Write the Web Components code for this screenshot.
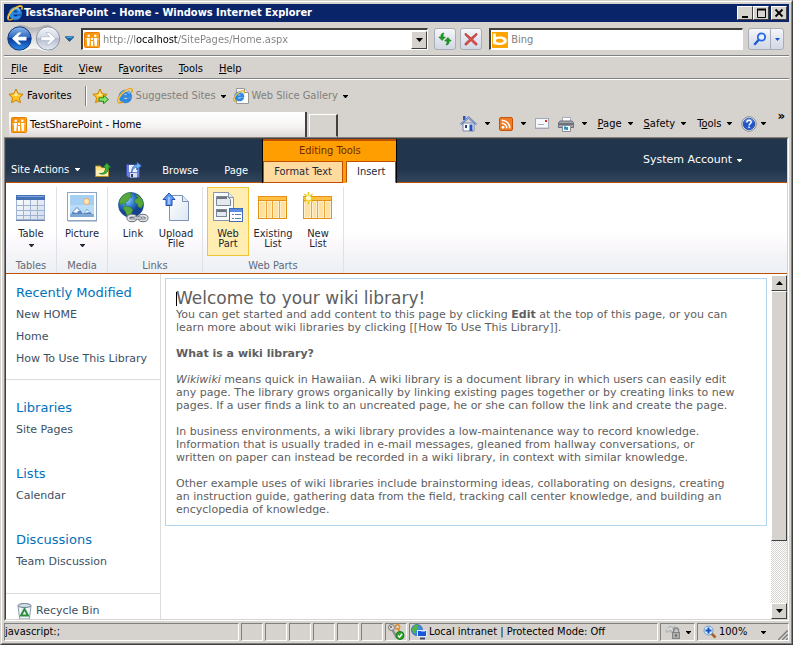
<!DOCTYPE html>
<html lang="en">
<head>
<meta charset="utf-8">
<title>TestSharePoint - Home - Windows Internet Explorer</title>
<style>
  html, body { height: 100%; margin: 0; }
  body {
    --face: #d6d3ce; --shade: #808080; --dark: #404040; --accent: #c04f00;
    --ui: "DejaVu Sans Condensed", "DejaVu Sans", sans-serif;
    --page: "DejaVu Sans", sans-serif;
    background: var(--face); color: #000;
    font: 11px/14px var(--ui);
    overflow: hidden;
  }
</style>
</head>
<body>
<browser-window>
  <title-bar slot="chrome">TestSharePoint - Home - Windows Internet Explorer</title-bar>
  <address-bar slot="chrome"></address-bar>
  <menu-bar slot="chrome"></menu-bar>
  <favorites-bar slot="chrome"></favorites-bar>
  <tab-row slot="chrome">TestSharePoint - Home</tab-row>

  <ribbon-nav></ribbon-nav>
  <ribbon-strip>
    <ribbon-group label="Tables">
      <ribbon-button icon="table" menu>Table</ribbon-button>
    </ribbon-group>
    <ribbon-group label="Media">
      <ribbon-button icon="picture" menu>Picture</ribbon-button>
    </ribbon-group>
    <ribbon-group label="Links">
      <ribbon-button icon="link">Link</ribbon-button>
      <ribbon-button icon="upload" mid>Upload<br>File</ribbon-button>
    </ribbon-group>
    <ribbon-group label="Web Parts">
      <ribbon-button icon="webpart" active>Web<br>Part</ribbon-button>
      <ribbon-button icon="list" wide>Existing<br>List</ribbon-button>
      <ribbon-button icon="newlist">New<br>List</ribbon-button>
    </ribbon-group>
  </ribbon-strip>
  <page-body>
    <side-nav slot="side"></side-nav>
    <wiki-editor>
      <h1>Welcome to your wiki library!</h1>
      <p>You can get started and add content to this page by clicking <b>Edit</b> at the top of this page, or you can learn more about wiki libraries by clicking [[How To Use This Library]].</p>
      <p><b>What is a wiki library?</b></p>
      <p><i>Wikiwiki</i> means quick in Hawaiian. A wiki library is a document library in which users can easily edit any page. The library grows organically by linking existing pages together or by creating links to new pages. If a user finds a link to an uncreated page, he or she can follow the link and create the page.</p>
      <p>In business environments, a wiki library provides a low-maintenance way to record knowledge. Information that is usually traded in e-mail messages, gleaned from hallway conversations, or written on paper can instead be recorded in a wiki library, in context with similar knowledge.</p>
      <p>Other example uses of wiki libraries include brainstorming ideas, collaborating on designs, creating an instruction guide, gathering data from the field, tracking call center knowledge, and building an encyclopedia of knowledge.</p>
    </wiki-editor>
    <scroll-bar slot="scroll"></scroll-bar>
  </page-body>

  <status-bar slot="status"></status-bar>
</browser-window>

<script>
const define = (name, css, html, setup) => {
  const tpl = document.createElement('template');
  tpl.innerHTML = `<style>
    *,:host{box-sizing:border-box}
    button,input{font:inherit;color:inherit;margin:0;padding:0;border:0;background:none;border-radius:0}
    a{color:inherit;text-decoration:none}
    ${css}</style>${html}`;
  customElements.define(name, class extends HTMLElement {
    constructor() {
      super();
      this.attachShadow({ mode: 'open' }).append(tpl.content.cloneNode(true));
    }
    connectedCallback() { if (setup) setup(this, this.shadowRoot); }
  });
};

const ieLetter = `
  <path d="M8.400 2.300C4.600 2.300 2 5 2 8.800c0 3.800 2.800 6 6.400 6 3 0 5.200-1.400 6-4.200h-4c-.4.700-.9 1-1.800 1-1.200 0-2-.8-2.100-2h8.200C14.900 5.400 12.400 2.300 8.400 2.300zM6.600 7.200c.2-1.100.8-1.700 1.900-1.700s1.800.6 1.900 1.700z" fill="#2b8ae6" stroke="#1f74d0" stroke-width=".6"/>
  <path d="M3.300 7.400C4.100 4.700 6 3.200 8.500 3.200c1.900 0 3.400.8 4.200 2.200" fill="none" stroke="#8fd0ff" stroke-width="1.100"/>
  <path d="M1.700 14.800C-.6 12.900 2.400 7 7.300 3.600 10.500 1.300 13.900.200 14.900 1.500c.5.700.3 1.900-.3 3.100" fill="none" stroke="#e0a41c" stroke-width="1.800"/>
  <path d="M1.700 14.500C.2 12.500 3 7.400 7.300 4.100 10.400 1.800 13.500.900 14.500 1.700" fill="none" stroke="#ffe27a" stroke-width=".8"/>
  <path d="M1.700 14.700c1 .6 2.700.1 4.300-.9" fill="none" stroke="#d79a13" stroke-width="1.300"/>`;
const star = `<path d="M8 1l2.100 4.700 5 .6-3.700 3.400 1 5L8 12.200l-4.400 2.500 1-5L.9 6.300l5-.6z" fill="#ffc321" stroke="#c98105"/><path d="M8 3l1.400 3.500 3.300.4-5.500 1L4 7l2.700-.5z" fill="#ffeb95"/>`;
const listGrid = `<rect x=".5" y="4.500" width="28" height="22" fill="#fff3d0" stroke="#e59118"/><rect x="1" y="5" width="27" height="4" fill="#ffbf45"/><path d="M1 8.500h27" stroke="#e59118"/><path d="M1.500 9.500h6v16h-6zM9.500 9.500h4v16h-4zM15.500 9.500h5v16h-5zM22.500 9.500h5v16h-5z" fill="#ffe0a0" stroke="#fff0cc"/><path d="M8.500 9v17M14.500 9v17M21.500 9v17" stroke="#eda53b"/>`;

const ICONS = {
  ie: [16, 16, ieLetter],
  iepage: [16, 16, `<path d="M3.500.5h8l4 4v11h-12z" fill="#fff" stroke="#999"/><path d="M11.500.5v4h4" fill="#e8e8e8" stroke="#999"/><g transform="translate(0 2) scale(.75)">${ieLetter}</g>`],
  sp: [16, 16, `<defs><linearGradient id="g" x2="1" y2="1"><stop stop-color="#f68a00"/><stop offset="1" stop-color="#ffad26"/></linearGradient></defs><rect x=".5" y=".5" width="15" height="15" rx="1" fill="url(#g)" stroke="#e87d00"/><g fill="#fff"><circle cx="4.700" cy="3.700" r="1.300"/><circle cx="11.300" cy="3.700" r="1.300"/><circle cx="8" cy="6.900" r="1.200"/><path d="M2.700 6h3.200v2.300L5.200 14H3.200zM10.100 6h3.200l-.5 8h-2l-.7-5.700zM6.900 9h2.200l-.2 5H7.100z"/><circle cx="1.900" cy="7" r=".5"/><circle cx="14.100" cy="7" r=".5"/></g>`],
  bing: [16, 16, `<rect width="16" height="16" fill="#ffa500"/><path d="M1 1.500h2.800V5C7 3.800 14.800 4 14.800 8.700S4 14 1 11.500zM3.800 8.600c0 2.900 7.700 3 7.700.2S3.800 6.200 3.800 8.600z" fill="#fff" fill-rule="evenodd"/>`],
  nav: [56, 30, `<defs>
      <linearGradient id="p" x2="0" y2="1"><stop stop-color="#a3a3a3"/><stop offset=".35" stop-color="#d4d4d4"/><stop offset="1" stop-color="#fff"/></linearGradient>
      <linearGradient id="b" x2="0" y2="1"><stop stop-color="#89b9ec"/><stop offset=".45" stop-color="#2e69bf"/><stop offset=".5" stop-color="#06399c"/><stop offset="1" stop-color="#2e8de8"/></linearGradient>
      <linearGradient id="f" x2="0" y2="1"><stop stop-color="#f4f6fa"/><stop offset=".48" stop-color="#d0d6e2"/><stop offset=".5" stop-color="#b4bccd"/><stop offset="1" stop-color="#e6eaf4"/></linearGradient></defs>
    <path d="M14 1c6 0 8 3 14 3S36 1 42 1a14 14 0 0 1 0 27c-6 0-8-3-14-3s-8 3-14 3A14 14 0 0 1 14 1z" fill="url(#p)" stroke="#bbb" stroke-width=".6"/>
    <circle cx="13.500" cy="14.500" r="11.700" fill="url(#b)" stroke="#17377e"/><circle cx="42" cy="14.500" r="11.700" fill="url(#f)" stroke="#8c95a6"/>
    <path d="M6 14.500l6.500-6h3l-3.700 4.300H20.500v3.600H11.800l3.700 4.200h-3z" fill="#fff"/><path d="M49.500 14.500l-6.500-6h-3l3.700 4.300H35v3.600h8.700L40 20.600h3z" fill="#fff" stroke="#9aa4b6" stroke-width=".5"/>`],
  bluedown: [9, 6, `<path d="M.5.500h8v1l-4 4-4-4z" fill="#1c66b0" stroke="#0d4478" stroke-width=".6"/><path d="M1.500 1.200h6" stroke="#53c2ea"/>`],
  smallblue: [5, 3, `<path d="M0 0h5L2.500 3z" fill="#1750d8"/>`],
  down: [5, 3, `<path d="M0 0h5v.6L2.900 3h-.8L0 .6z" fill="currentColor"/>`],
  bigdown: [7, 4, `<path d="M0 0h7L3.500 4z"/>`],
  bigup: [7, 4, `<path d="M0 4h7L3.500 0z"/>`],
  refresh: [16, 16, `<g fill="#1f9d1f" stroke="#0a6b12" stroke-width=".5"><path d="M6.500 2C4 2.300 3.900 4 3.900 6H1.800l3.300 3.500L8.400 6H6.100c0-1.500-.2-2.500 1-3.500z"/><path d="M9.500 14c2.500-.3 2.600-2 2.600-4h2.100l-3.300-3.500L7.600 10h2.300c0 1.500.2 2.500-1 3.500z"/></g>`],
  stop: [16, 16, `<path d="M3 2.500L8 6.800l5-4.300h1V4L9.600 8.200 14 12.500V14h-1.500L8 9.700 3.500 14H2v-1.500l4.400-4.300L2 4V2.500z" fill="#d9504c" stroke="#a32a27" stroke-width=".6"/>`],
  search: [14, 14, `<circle cx="8.500" cy="5" r="3.700" fill="#eaf2ff" stroke="#2468e4" stroke-width="1.800"/><path d="M5.800 7.800L1.300 12.700" stroke="#1c5ad8" stroke-width="2.400"/>`],
  star: [16, 16, star],
  staradd: [17, 17, `${star}<path d="M7 9.800h4.500V7.300l5 4.200-5 4.200v-2.500H7z" fill="#8be36f" stroke="#1c8b1c"/>`],
  home: [17, 17, `<path d="M3 8h11v8H3z" fill="#f7f9ff" stroke="#7b86a8"/><path d="M3 1h2.500v4H3z" fill="#3154b8"/><path d="M.5 8.800L8.500 1.500l8 7.300-1 .7-7-6.200-7 6.200z" fill="#a9c2ee" stroke="#4c6aa8" stroke-width=".8"/><path d="M5 10h2v3H5z" fill="#333c66"/><path d="M9.500 9.500h3V16h-3z" fill="#2253b8"/>`],
  feed: [14, 14, `<rect x=".5" y=".5" width="13" height="13" rx="1.500" fill="#f07c26" stroke="#c5530e"/><circle cx="4" cy="10.300" r="1.400" fill="#fff"/><path d="M2.800 6.300a5 5 0 0 1 5 5M2.800 3.200a8 8 0 0 1 8 8" fill="none" stroke="#fff" stroke-width="1.500"/>`],
  mail: [14, 11, `<rect x=".5" y=".5" width="13" height="10" fill="#f5f7fb" stroke="#a2a7b4"/><path d="M1 9.500h12" stroke="#d5d9e2"/><rect x="10" y="2" width="2" height="2" fill="#e02c1c"/><path d="M3 6.500h6" stroke="#aaa"/>`],
  printer: [16, 16, `<path d="M4.500 1.500h8V7h-8z" fill="#fff" stroke="#aab"/><path d="M.5 6.500L2 5h12l1.500 1.500v5H.5z" fill="#a2a5aa" stroke="#6c7078"/><path d="M1 8h14" stroke="#3a3d44"/><path d="M4.500 9.500h8v6h-8z" fill="#f3f8ff" stroke="#8a8f9a"/><path d="M6 12h2" stroke="#2c84dd" stroke-width="3"/><rect x="8" y="11" width="2" height="3" fill="#2e9c8c"/>`],
  help: [16, 16, `<defs><linearGradient id="h" x2="0" y2="1"><stop stop-color="#6b9df2"/><stop offset=".5" stop-color="#1f4fc0"/><stop offset="1" stop-color="#2b66d8"/></linearGradient></defs><circle cx="8" cy="8" r="7.300" fill="#dfe3ec" stroke="#8a8f9c"/><circle cx="8" cy="8" r="5.800" fill="url(#h)" stroke="#1c3d92" stroke-width=".7"/><path d="M5.900 6.500c0-3 4.300-2.800 4.300-.3 0 1.600-2.100 1.500-2.100 3.200M8.100 10.500v1.500" fill="none" stroke="#fff" stroke-width="1.500"/>`],
  folderup: [16, 16, `<path d="M.5 4h5l1 1.500h7v9H.5z" fill="#ffe287" stroke="#b58a1c"/><path d="M1 8h12v6H1z" fill="#ffefb4"/><path d="M4.500 11.500C9 12 10.500 9 10.500 5.500H8.300L11.800 1l3.900 4.500h-2.300c.3 5-3.600 8-8.900 6z" fill="#3fb343" stroke="#157a1f" stroke-width=".7"/>`],
  saveup: [16, 16, `<path d="M.5 2.500h13v13H2.500L.5 14z" fill="#6a80dc" stroke="#3a4ba6"/><rect x="3" y="3" width="8" height="7" fill="#f1f4ff"/><rect x="4" y="11" width="7" height="4.500" fill="#d7dcec"/><rect x="5" y="12" width="2" height="3" fill="#333c66"/><path d="M5.500 11C7 6.500 8.500 5.500 10.500 5.300V7.500L15.500 4 11-.1V2.500C7.500 3 5.500 6 5.500 11z" fill="#6fb2f4" stroke="#2358a8" stroke-width=".7"/>`],
  table: [30, 30, `<defs><linearGradient id="t" x2="1" y2="1"><stop stop-color="#fff"/><stop offset="1" stop-color="#cfdcec"/></linearGradient></defs><rect x=".5" y="3.500" width="28" height="24" fill="url(#t)" stroke="#9fb3d1"/><path d="M1 13.500h28M1 18.500h28M1 23.500h28M7.500 8v20M14.500 8v20M21.500 8v20" stroke="#9fb3d1"/><rect x="0" y="3" width="29" height="5" fill="#4470b5"/><path d="M1 4.500h27" stroke="#7fa3dc"/><path d="M0 28.500h29" stroke="#6d84a8"/>`],
  picture: [30, 30, `<rect x=".5" y=".5" width="29" height="28" fill="#fff" stroke="#8fa5c3"/><path d="M1 29.500h29" stroke="#c3cbd8"/><rect x="3" y="3" width="24" height="22" fill="#b9dcf7"/><rect x="3" y="3" width="24" height="10" fill="#a5d0f3"/><circle cx="19.500" cy="9.500" r="3" fill="#ffe6b0" stroke="#f2a766"/><path d="M3 24l3-5 4-4 4 4 2 3 4-5 4 4 3 3v1H3z" fill="#5a86bf"/><path d="M6 20l4-4 3 3-2 0-1 2zM17 21l3-3 3 2-3 .5z" fill="#f4f9ff"/><path d="M3 22h24v3H3z" fill="#7fa7d4"/>`],
  link: [30, 30, `<defs><radialGradient id="w" cx=".35" cy=".3"><stop stop-color="#8fd0fb"/><stop offset=".6" stop-color="#2d78cf"/><stop offset="1" stop-color="#154290"/></radialGradient></defs><circle cx="13" cy="13" r="12.500" fill="url(#w)" stroke="#27508f" stroke-width=".7"/><g fill="#57a83c" stroke="#2f7024" stroke-width=".5"><path d="M3 6c3-5 8-6 11-5l-2 2 2 2-3 1-1 3-3 1 1 3-4-2-2 2C.9 10 1.500 8 3 6z"/><path d="M17 2c5 2 8 5 8.300 10l-2 4-3-1-1-3-3-2 1-3 3-1-2-2z"/><path d="M7 14l5 1 3 3-2 4-1 3-3-1-2-5-2-3z"/></g><g fill="none" stroke="#666d76" stroke-width="3.600"><ellipse cx="14" cy="26" rx="3.800" ry="2.400"/><ellipse cx="25" cy="26" rx="3.800" ry="2.400"/></g><g fill="none" stroke="#dfe3e8" stroke-width="1.800"><ellipse cx="14" cy="26" rx="3.800" ry="2.400"/><ellipse cx="25" cy="26" rx="3.800" ry="2.400"/></g><path d="M16 26h7" stroke="#666d76" stroke-width="3"/><path d="M16 26h7" stroke="#dfe3e8" stroke-width="1.400"/>`],
  upload: [28, 30, `<defs><linearGradient id="u" x2="1" y2="1"><stop stop-color="#fff"/><stop offset="1" stop-color="#dce6f3"/></linearGradient></defs><path d="M7.500 3.500h13l6 6v19h-19z" fill="url(#u)" stroke="#7d93b5"/><path d="M20.500 3.500v6h6" fill="#dfe9f6" stroke="#7d93b5"/><path d="M7 1L1 7.500h3v6h6v-6h3z" fill="#5f9af0" stroke="#244fae"/><path d="M6 5h2v7H6z" fill="#9cc4fb"/>`],
  webpart: [30, 30, `<path d="M.5.500h15l5 5v23H.5z" fill="#f8fafc" stroke="#8895a8"/><path d="M15.500.500v5h5" fill="#dfe7f2" stroke="#8895a8"/><path d="M3.500 4.500h11l3 3v6h-14z" fill="#e4e9ef" stroke="#7c8794"/><path d="M4 6h10" stroke="#6c7682" stroke-width="2"/><rect x="3.500" y="17.500" width="10" height="7" fill="#e4e9ef" stroke="#7c8794"/><path d="M4 19h9" stroke="#6c7682" stroke-width="2"/><rect x="16.500" y="16.500" width="13" height="13" fill="#fff" stroke="#3d6cb8"/><path d="M17 18.500h12" stroke="#5b8ee0" stroke-width="3"/><path d="M19 22.500h2M22 22.500h6M19 26.500h2M22 26.500h6" stroke="#5b7cb5"/>`],
  list: [30, 30, listGrid],
  newlist: [30, 30, `${listGrid}<path d="M5.500 0v12M0 6h12M1.500 2l8 8M9.500 2l-8 8" stroke="#ecca1c" stroke-width="1.700"/><circle cx="5.500" cy="6" r="2.500" fill="#fffbd0"/>`],
  recycle: [15, 17, `<path d="M1 3h13l-1.700 13H2.700z" fill="#eef4f8" stroke="#8a9eb0"/><ellipse cx="7.500" cy="2.500" rx="6.500" ry="2" fill="#d3dde6" stroke="#708295"/><path d="M7.500 6L4 12.500h7z" fill="none" stroke="#2f8d3e" stroke-width="2"/>`],
  keys: [18, 18, `<path d="M5 6l5 9" stroke="#8d8d8d" stroke-width="2.400"/><path d="M11 5l2 6" stroke="#e0912b" stroke-width="2"/><circle cx="4.500" cy="4.500" r="3" fill="#d8d8d8" stroke="#777"/><circle cx="10.500" cy="4" r="2.200" fill="none" stroke="#e0912b" stroke-width="1.400"/><circle cx="4" cy="4" r="1" fill="#666"/><circle cx="13" cy="12.500" r="4" fill="#2da52d" stroke="#1b7c1b"/><path d="M11 12.500l1.500 1.700 2.600-3.400" fill="none" stroke="#fff" stroke-width="1.400"/>`],
  intranet: [16, 16, `<circle cx="6" cy="6" r="5.500" fill="#3c8be0" stroke="#23589c" stroke-width=".7"/><path d="M1.500 4C3 1 6 0 8 1L6 3l1 2-3 2 1 3C2 9 .5 7 1.500 4z" fill="#54b83e"/><rect x="6.500" y="6.500" width="9" height="6" fill="#1b57d8" stroke="#e6e9f2"/><path d="M9 14.500h5" stroke="#46506a" stroke-width="2"/><path d="M10 7.500h4" stroke="#71a6ff"/>`],
  lock: [18, 16, `<path d="M1 7l5-6 2 2 3-1 2 4-4 4-4-2-3 1z" fill="#b9bbbd"/><path d="M3 6l4-2 2 3" fill="none" stroke="#f5f5f5"/><path d="M9.500 9V6.500a2.500 2.500 0 0 1 5 0V9" fill="none" stroke="#8a8a8a" stroke-width="1.500"/><rect x="8.500" y="8.500" width="7" height="6" fill="#adadad" stroke="#858585"/><path d="M12 10.500v2" stroke="#555" stroke-width="1.500"/>`],
  zoomin: [14, 14, `<path d="M8 8l4.500 4.500" stroke="#a8622a" stroke-width="2.600"/><circle cx="5.500" cy="5.500" r="4.500" fill="#d6ebff" stroke="#6f9ccc"/><path d="M5.500 2.500v6M2.500 5.500h6" stroke="#1453c0" stroke-width="2"/>`],
  caret: [3, 14, `<path d="M.5 0v14" stroke="#000"/>`],
  min: [12, 11, `<path d="M3 9h6" stroke="#000" stroke-width="2"/>`],
  max: [12, 11, `<path d="M2.500 2v7.500h8V1" fill="none" stroke="#000"/><path d="M2 1.500h9" stroke="#000" stroke-width="2"/>`],
  close: [12, 11, `<path d="M2.500 1.500l7 7M9.500 1.500l-7 7" stroke="#000" stroke-width="1.800"/>`],
  grip: [11, 11, `<path d="M0 11L11 0M4 11l7-7M8 11l3-3" stroke="#fff"/><path d="M1 11L11 1M5 11l6-6M9 11l2-2" stroke="#808080" stroke-width="1.600"/>`],
};

customElements.define('ui-icon', class extends HTMLElement {
  connectedCallback() {
    if (this.shadowRoot) return;
    const [w, h, body] = ICONS[this.getAttribute('name')];
    this.attachShadow({ mode: 'open' }).innerHTML =
      `<style>:host{display:block;flex:none;width:${w}px;height:${h}px}svg{display:block;overflow:visible}</style>
       <svg width="${w}" height="${h}" viewBox="0 0 ${w} ${h}" aria-hidden="true">${body}</svg>`;
  }
});

define('browser-window', `
  :host{display:block;height:100vh;border:1px solid;border-color:var(--face) var(--dark) var(--dark) var(--face)}
  .in{height:100%;border:1px solid;border-color:#fff var(--shade) var(--shade) #fff;padding:2px;display:flex;flex-direction:column}
  .view{flex:1;min-height:0;display:flex;flex-direction:column;border:1px solid;border-color:var(--shade) #fff #fff var(--shade)}
  .page{flex:1;min-height:0;display:flex;flex-direction:column;background:#fff;border:1px solid;border-color:var(--dark) var(--face) var(--face) var(--dark)}`,
  `<div class="in"><slot name="chrome"></slot><div class="view"><main class="page"><slot></slot></main></div><slot name="status"></slot></div>`);

define('title-bar', `
  :host{display:flex;align-items:center;flex:none;height:18px;background:#0a246a;color:#fff;font-weight:bold;padding:0 2px 0 3px}
  span{flex:1;white-space:nowrap;overflow:hidden;padding-left:1px}
  button{width:16px;height:14px;background:var(--face);border:1px solid;border-color:#fff var(--dark) var(--dark) #fff;display:flex;align-items:center;justify-content:center}
  button:last-child{margin-left:2px}`,
  `<ui-icon name="ie"></ui-icon><span><slot></slot></span>
   <button aria-label="Minimize"><ui-icon name="min"></ui-icon></button><button aria-label="Maximize"><ui-icon name="max"></ui-icon></button><button aria-label="Close"><ui-icon name="close"></ui-icon></button>`);

define('address-bar', `
  :host{display:flex;align-items:center;flex:none;height:35px;padding:0 5px 0 2px;border-bottom:1px solid #fff;box-shadow:inset 0 -1px var(--shade)}
  .nav{position:relative;display:flex}
  .nav button{position:absolute;top:2px;width:26px;height:26px;border-radius:13px}
  .nav .f{right:1px}
  .hist{margin:0 7px 0 3px;display:flex}
  .box{display:flex;align-items:center;height:22px;background:#fff;border:2px solid;border-color:var(--dark) #fff #fff var(--dark);border-right-width:1px;border-bottom-width:1px;padding-left:1px}
  .addr{flex:349}
  .find{flex:254;margin:0 5px 0 7px}
  input{flex:1;min-width:0;margin-left:3px;outline:0;color:#808080}
  .addr input{background:linear-gradient(90deg,#808080 32px,#000 32px,#000 75px,#808080 75px);-webkit-background-clip:text;background-clip:text;-webkit-text-fill-color:transparent}
  .drop{width:16px;height:18px;background:var(--face);border:1px solid;border-color:#fff var(--dark) var(--dark) #fff;display:grid;place-items:center}
  .sq,.split{height:22px;border:1px solid #a9adb8;border-radius:3px;background:linear-gradient(#f6f7fb,#e2e5ee 50%,#d3d8e6);display:grid;place-items:center}
  .sq{width:22px;margin-left:6px}.sq + .sq{margin-left:4px}
  .split{grid-template-columns:21px 13px;width:36px;padding:0}
  .split button{height:20px;width:100%;display:grid;place-items:center}
  .split button + button{border-left:1px solid #a9adb8}`,
  `<div class="nav"><ui-icon name="nav"></ui-icon><button aria-label="Back"></button><button class="f" aria-label="Forward"></button></div>
   <button class="hist" aria-label="Recent pages"><ui-icon name="bluedown"></ui-icon></button>
   <div class="box addr"><ui-icon name="sp"></ui-icon><input type="text" aria-label="Address" value="http://localhost/SitePages/Home.aspx"><button class="drop" aria-label="Show addresses"><ui-icon name="bigdown"></ui-icon></button></div>
   <button class="sq" aria-label="Refresh"><ui-icon name="refresh"></ui-icon></button><button class="sq" aria-label="Stop"><ui-icon name="stop"></ui-icon></button>
   <div class="box find"><ui-icon name="bing"></ui-icon><input type="text" aria-label="Search" value="Bing"></div>
   <div class="split"><button aria-label="Search"><ui-icon name="search"></ui-icon></button><button aria-label="Search options"><ui-icon name="smallblue"></ui-icon></button></div>`);

define('menu-bar', `
  :host{display:flex;align-items:center;flex:none;height:23px;padding:1px 0 0 7px;gap:16px;border-bottom:1px solid #fff;box-shadow:inset 0 -1px var(--shade)}`,
  `<button><u>F</u>ile</button><button><u>E</u>dit</button><button><u>V</u>iew</button><button>F<u>a</u>vorites</button><button><u>T</u>ools</button><button><u>H</u>elp</button>`);

define('favorites-bar', `
  :host{display:flex;align-items:center;flex:none;height:32px;padding-left:4px}
  button,a{display:flex;align-items:center;gap:3px;white-space:nowrap}
  .sep{width:2px;height:20px;background:var(--shade);border-right:1px solid #fff;margin:0 5px 0 13px}
  a{color:#808080;margin-left:8px}
  a ui-icon:last-child{color:#000;margin-left:2px}
  a + a{margin-left:7px}`,
  `<button><ui-icon name="star"></ui-icon>Favorites</button><span class="sep"></span>
   <button aria-label="Add to Favorites Bar"><ui-icon name="staradd"></ui-icon></button>
   <a href="#"><ui-icon name="ie"></ui-icon>Suggested Sites<ui-icon name="down"></ui-icon></a>
   <a href="#"><ui-icon name="iepage"></ui-icon>Web Slice Gallery<ui-icon name="down"></ui-icon></a>`);

define('tab-row', `
  :host{display:flex;flex:none;height:25px;padding-left:5px;align-items:flex-end}
  .tab{flex:0 1 298px;height:25px;display:flex;align-items:center;gap:3px;padding-left:2px;white-space:nowrap;background:linear-gradient(#fff,#f6f2f2 60%,#ddd8d8);border-right:2px solid var(--dark)}
  .new{width:29px;height:23px;margin-left:2px;border:1px solid;border-color:#fff var(--dark) transparent #fff;border-right-width:2px}
  nav{flex:1;display:flex;align-items:center;justify-content:flex-end;height:25px;padding-bottom:2px}
  nav button{display:flex;align-items:center;gap:8px;margin-left:11px}
  nav .t{gap:6px}
  nav .i{margin-left:9px}
  nav .h{gap:4px;margin-left:9px}
  nav .more{align-self:flex-start;margin:-3px 4px 0 11px;font-weight:bold;font-size:13px}`,
  `<button class="tab"><ui-icon name="sp"></ui-icon><slot></slot></button><button class="new" aria-label="New Tab"></button>
   <nav aria-label="Command bar">
    <button aria-label="Home"><ui-icon name="home"></ui-icon><ui-icon name="down"></ui-icon></button>
    <button class="i" aria-label="Feeds"><ui-icon name="feed"></ui-icon><ui-icon name="down"></ui-icon></button>
    <button class="i" aria-label="Read mail"><ui-icon name="mail"></ui-icon></button>
    <button class="i" aria-label="Print"><ui-icon name="printer"></ui-icon><ui-icon name="down"></ui-icon></button>
    <button class="t"><span><u>P</u>age</span><ui-icon name="down"></ui-icon></button>
    <button class="t"><span><u>S</u>afety</span><ui-icon name="down"></ui-icon></button>
    <button class="t"><span>T<u>o</u>ols</span><ui-icon name="down"></ui-icon></button>
    <button class="h" aria-label="Help"><ui-icon name="help"></ui-icon><ui-icon name="down"></ui-icon></button>
    <button class="more">»</button>
   </nav>`);

define('ribbon-nav', `
  :host{display:flex;flex:none;height:44px;align-items:flex-end;padding-left:5px;color:#fff;background:linear-gradient(#21354c 70%,#31465e);border-bottom:1px solid var(--accent)}
  button{white-space:nowrap}
  .site{display:flex;align-items:center;gap:6px;height:25px}
  .ic{height:25px;display:flex;align-items:center;margin-left:15px}
  .t{height:22px;margin-left:20px}
  .t + .t{margin-left:26px}
  .ctx{height:44px;margin:0 0 -1px 14px;border:1px solid #000;border-top-width:0;border-bottom:0;background:#ff9e00;display:flex;flex-direction:column;box-shadow:inset 0 2px var(--accent)}
  .ctx span{height:22px;line-height:24px;text-align:center;color:#6b2a00}
  .sub{display:flex;gap:3px;height:22px;color:#1e2a3a}
  .sub button{padding:0 10px;background:#ffdb9f;border:1px solid var(--accent)}
  .sub .on{background:#fff;border-bottom-color:#fff}
  .user{margin:0 45px 0 auto;height:44px;display:flex;align-items:center;gap:5px;font-family:var(--page)}`,
  `<button class="site">Site Actions<ui-icon name="down"></ui-icon></button>
   <button class="ic" aria-label="Navigate Up"><ui-icon name="folderup"></ui-icon></button><button class="ic" aria-label="Save and Close"><ui-icon name="saveup"></ui-icon></button>
   <button class="t">Browse</button><button class="t">Page</button>
   <div class="ctx"><span>Editing Tools</span><div class="sub"><button>Format Text</button><button class="on">Insert</button></div></div>
   <button class="user">System Account<ui-icon name="down"></ui-icon></button>`);

define('ribbon-strip', `
  :host{display:flex;flex:none;height:91px;padding-top:4px;background:linear-gradient(#fff 55%,#fbf8fc 68%,#f3f4f6 82%,#ecf0f5);border-bottom:1px solid var(--accent)}`,
  `<slot></slot>`);

define('ribbon-group', `
  :host{display:flex;flex-direction:column;border-right:1px solid #dfe1e8;padding:0 4px}
  .b{display:flex;flex:1}
  .l{text-align:center;color:#5f6b7a;line-height:14px}`,
  `<div class="b"><slot></slot></div><div class="l"></div>`,
  (el, root) => { root.querySelector('.l').textContent = el.getAttribute('label'); });

define('ribbon-button', `
  :host{display:block;width:42px}
  :host([mid]){width:44px}
  :host([wide]){width:48px}
  button{width:100%;height:69px;border:1px solid transparent;display:flex;flex-direction:column;align-items:center;padding-top:4px;color:#1e2733}
  :host([active]) button{background:#ffedb1;border-color:#f3c436}
  .x{line-height:10px;margin-top:7px;white-space:nowrap}
  .m{margin-top:5px}`,
  `<button><span class="i"></span><span class="x"><slot></slot></span></button>`,
  (el, root) => {
    root.querySelector('.i').innerHTML = `<ui-icon name="${el.getAttribute('icon')}"></ui-icon>`;
    if (el.hasAttribute('menu')) root.querySelector('button').insertAdjacentHTML('beforeend', '<ui-icon class="m" name="down"></ui-icon>');
  });

define('page-body', `
  :host{display:flex;flex:1;min-height:0;overflow:hidden}
  .c{flex:1;min-width:0;padding:4px}`,
  `<slot name="side"></slot><div class="c"><slot></slot></div><slot name="scroll"></slot>`);

define('side-nav', `
  :host{display:block;flex:none;width:155px;border-right:1px solid #dcdcdc;font-family:var(--page);color:#3b4f65;white-space:nowrap;overflow:hidden}
  h2{margin:0;font-size:13px;font-weight:normal;line-height:22px;color:#0072bc}
  a{display:block;line-height:22px}
  section{padding:0 0 22px 10px}
  section:first-of-type{padding-top:8px;padding-bottom:9px;border-bottom:1px solid #dcdcdc;margin-bottom:17px}
  section:last-of-type{padding-bottom:20px}
  .bin{display:flex;align-items:center;gap:4px;border-top:1px solid #dcdcdc;padding:6px 0 0 11px}`,
  `<section><h2><a href="#">Recently Modified</a></h2><a href="#">New HOME</a><a href="#">Home</a><a href="#">How To Use This Library</a></section>
   <section><h2><a href="#">Libraries</a></h2><a href="#">Site Pages</a></section>
   <section><h2><a href="#">Lists</a></h2><a href="#">Calendar</a></section>
   <section><h2><a href="#">Discussions</a></h2><a href="#">Team Discussion</a></section>
   <a class="bin" href="#"><ui-icon name="recycle"></ui-icon>Recycle Bin</a>`);

define('wiki-editor', `
  :host{display:block;border:1px solid #b3d6f0;padding:9px 30px 9px 10px;font:11px/13px var(--page);color:#5e5e5e;position:relative}
  ui-icon{position:absolute;left:10px;top:13px}
  ::slotted(h1){margin:0;font-size:17px;line-height:20px;font-weight:normal}
  ::slotted(p){margin:0 0 13px}
  ::slotted(p:last-child){margin:0}`,
  `<ui-icon name="caret"></ui-icon><slot></slot>`);

define('scroll-bar', `
  :host{display:flex;flex-direction:column;flex:none;width:16px;margin-top:1px;background:repeating-conic-gradient(#fff 0 25%,var(--face) 0 50%) 0 0/2px 2px}
  button,.th{background:var(--face);border:1px solid;border-color:#fff var(--dark) var(--dark) #fff}
  button{height:16px;flex:none;display:grid;place-items:center}
  .th{flex:80}.r{flex:20}`,
  `<button aria-label="Scroll up"><ui-icon name="bigup"></ui-icon></button><div class="th"></div><div class="r"></div><button aria-label="Scroll down"><ui-icon name="bigdown"></ui-icon></button>`);

define('status-bar', `
  :host{display:flex;flex:none;height:20px;padding-top:2px;gap:2px}
  div{height:18px;border:1px solid;border-color:var(--shade) #fff #fff var(--shade);display:flex;align-items:center;white-space:nowrap;overflow:hidden}
  .s{flex:1 1 0;min-width:0}.e{width:22px}.k{width:22px;padding-left:1px}
  .z{width:249px;gap:2px;padding-left:1px}.p{width:35px;gap:4px;padding-left:3px}
  .q{width:92px;padding-left:5px}
  button{display:flex;align-items:center;gap:4px}
  .q button{flex:1;gap:2px}.q button ui-icon:last-child{margin:0 auto}
  .g{align-self:flex-end}`,
  `<div class="s">javascript:;</div><div class="e"></div><div class="e"></div><div class="e"></div><div class="e"></div><div class="e"></div><div class="e"></div>
   <div class="k"><ui-icon name="keys"></ui-icon></div><div class="z"><ui-icon name="intranet"></ui-icon>Local intranet | Protected Mode: Off</div>
   <div class="p"><button aria-label="Privacy"><ui-icon name="lock"></ui-icon><ui-icon name="down"></ui-icon></button></div>
   <div class="q"><button><ui-icon name="zoomin"></ui-icon>100%<ui-icon name="down"></ui-icon></button><ui-icon class="g" name="grip"></ui-icon></div>`);
</script>
</body>
</html>
